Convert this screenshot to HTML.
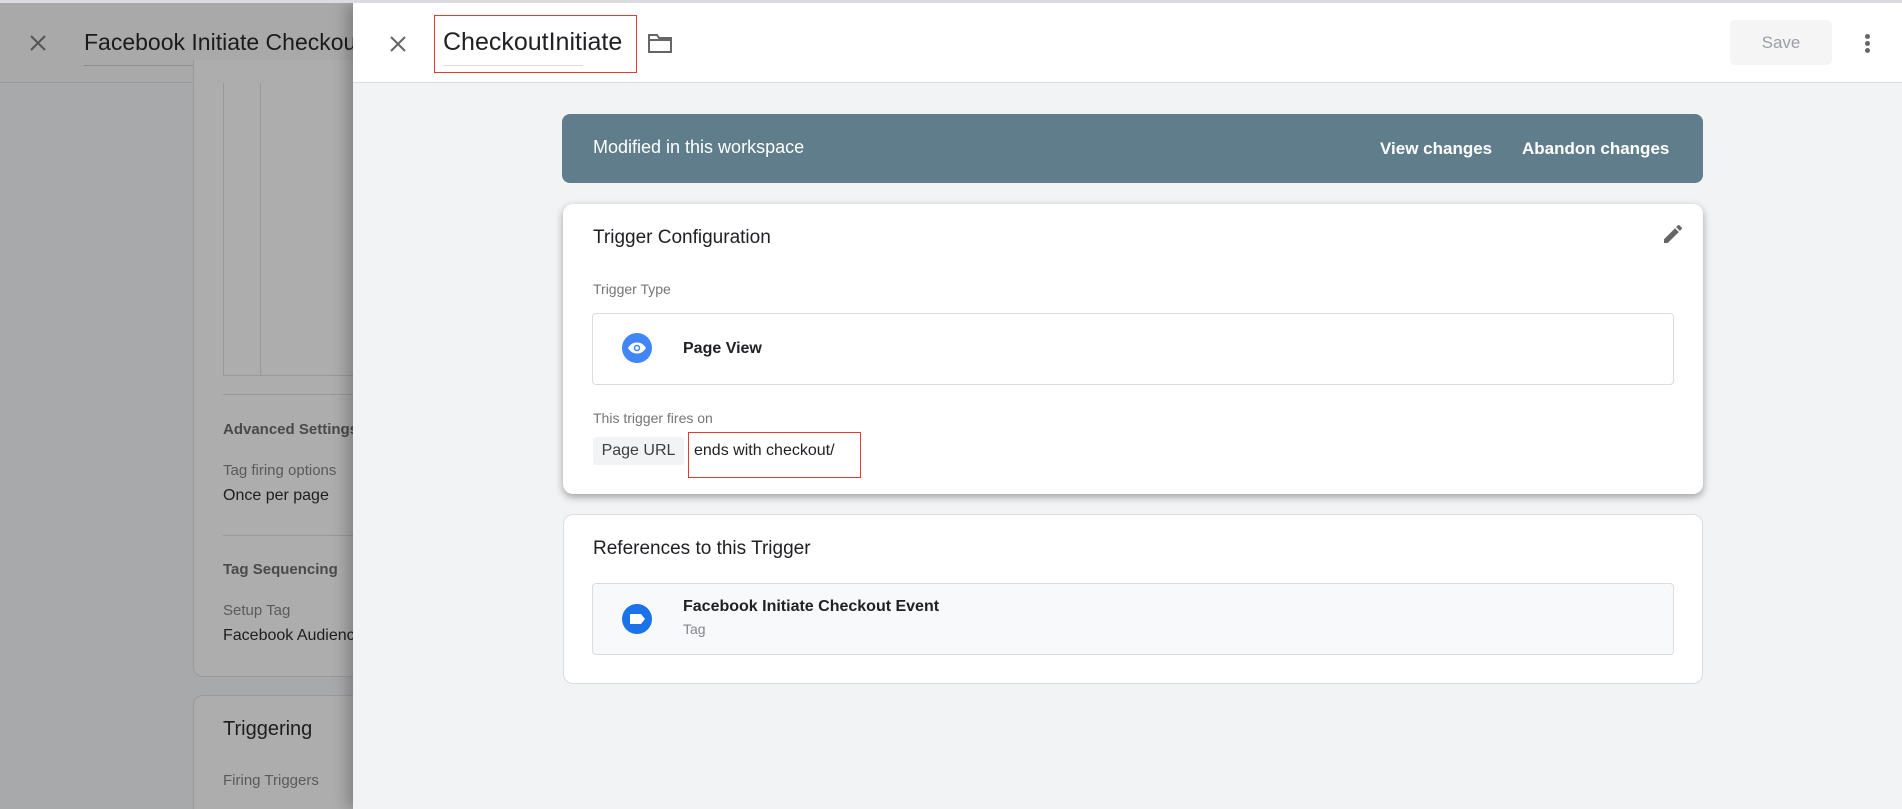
<!DOCTYPE html>
<html style="width:1902px;height:809px;overflow:hidden"><head><meta charset="utf-8"><style>
*{margin:0;padding:0;box-sizing:border-box}
body{width:1902px;height:809px;overflow:hidden;font-family:"Liberation Sans",Arial,sans-serif;background:#a8a9ab;position:relative}
.a{position:absolute}
.topline{left:0;top:0;width:1902px;height:3px;background:#dadce0;z-index:5}
.lhead{left:0;top:0;width:353px;height:83px;background:#a9a9a9;border-bottom:1px solid #999}
.lcard{background:#adadae;border:1px solid #9a9a9a;border-radius:10px}
.g{color:#5a5a5a;font-size:15px}
.d{color:#1e1e1e;font-size:16px}
.panel{left:353px;top:3px;width:1549px;height:806px;background:#f1f3f4;box-shadow:-6px 0 14px rgba(0,0,0,.25)}
.hdr{left:0;top:0;width:1549px;height:80px;background:#fff;border-bottom:1px solid #dadce0}
.card{background:#fff;border-radius:10px}
.lbl{color:#757575;font-size:14px}
</style></head><body>
<div class="a topline"></div>
<div class="a lhead"></div>
<svg class="a" style="left:28px;top:33px" width="20" height="20" viewBox="0 0 20 20"><path d="M3 3L17 17M17 3L3 17" stroke="#555" stroke-width="2"/></svg>
<div class="a" style="left:84px;top:29px;font-size:23px;color:#1b1b1b;white-space:nowrap">Facebook Initiate Checkout Event</div>
<div class="a" style="left:84px;top:65px;width:280px;height:1px;background:#8e8e8e"></div>
<div class="a lcard" style="left:193px;top:60px;width:200px;height:617px;border-top:none;border-radius:0 0 10px 10px"></div>
<div class="a" style="left:223px;top:83px;width:150px;height:293px;border:1px solid #999;border-top:none"></div>
<div class="a" style="left:260px;top:83px;width:1px;height:293px;background:#999"></div>
<div class="a" style="left:223px;top:394px;width:140px;height:1px;background:#999"></div>
<div class="a" style="left:223px;top:421px;font-size:15px;font-weight:bold;color:#4a4a4a;white-space:nowrap">Advanced Settings</div>
<div class="a g" style="left:223px;top:462px;white-space:nowrap">Tag firing options</div>
<div class="a d" style="left:223px;top:487px;white-space:nowrap">Once per page</div>
<div class="a" style="left:223px;top:535px;width:140px;height:1px;background:#999"></div>
<div class="a" style="left:223px;top:561px;font-size:15px;font-weight:bold;color:#4a4a4a;white-space:nowrap">Tag Sequencing</div>
<div class="a g" style="left:223px;top:602px;white-space:nowrap">Setup Tag</div>
<div class="a d" style="left:223px;top:627px;white-space:nowrap">Facebook Audience</div>
<div class="a lcard" style="left:193px;top:695px;width:200px;height:130px;border-bottom:none;border-radius:10px 10px 0 0;height:114px"></div>
<div class="a" style="left:223px;top:718px;font-size:20px;color:#1e1e1e">Triggering</div>
<div class="a g" style="left:223px;top:772px;white-space:nowrap">Firing Triggers</div>

<div class="a panel">
 <div class="a hdr"></div>
 <svg class="a" style="left:35px;top:31px" width="20" height="20" viewBox="0 0 20 20"><path d="M3 3L17 17M17 3L3 17" stroke="#666" stroke-width="2"/></svg>
 <div class="a" style="left:81px;top:12px;width:203px;height:58px;border:1px solid #e53935"></div>
 <div class="a" style="left:90px;top:25px;font-size:25px;color:#202124">CheckoutInitiate</div>
 <div class="a" style="left:90px;top:62px;width:140px;height:1px;background:#dadce0"></div>
 <svg class="a" style="left:294px;top:29px" width="26" height="22" viewBox="0 0 26 22"><path d="M2 3h8l2 3h12v14H2z" fill="none" stroke="#666" stroke-width="2"/><path d="M2 8h22" stroke="#666" stroke-width="2"/></svg>
 <div class="a" style="left:1377px;top:17px;width:102px;height:45px;background:#f5f5f5;border-radius:5px;color:#9aa0a6;font-size:17px;text-align:center;line-height:45px">Save</div>
 <div class="a" style="left:1512px;top:31px;width:5px;height:5px;border-radius:50%;background:#666;box-shadow:0 7px 0 #666,0 14px 0 #666"></div>

 <div class="a" style="left:209px;top:111px;width:1141px;height:69px;background:#607d8b;border-radius:8px"></div>
 <div class="a" style="left:240px;top:134px;font-size:18px;color:#fff">Modified in this workspace</div>
 <div class="a" style="left:1027px;top:136px;font-size:17px;color:#fff;font-weight:bold;white-space:nowrap">View changes</div>
 <div class="a" style="left:1169px;top:136px;font-size:17px;color:#fff;font-weight:bold;white-space:nowrap">Abandon changes</div>

 <div class="a card" style="left:210px;top:201px;width:1140px;height:290px;box-shadow:0 3px 8px rgba(0,0,0,.35)"></div>
 <div class="a" style="left:240px;top:224px;font-size:19px;color:#202124">Trigger Configuration</div>
 <svg class="a" style="left:1308px;top:219px" width="24" height="24" viewBox="0 0 24 24"><path d="M3 17.25V21h3.75L17.81 9.940l-3.75-3.75L3 17.25zM20.71 7.04a1 1 0 000-1.41l-2.34-2.34a1 1 0 00-1.41 0l-1.83 1.83 3.75 3.75 1.83-1.83z" fill="#666"/></svg>
 <div class="a lbl" style="left:240px;top:278px">Trigger Type</div>
 <div class="a" style="left:239px;top:310px;width:1082px;height:72px;border:1px solid #dadce0;border-radius:4px;background:#fff"></div>
 <svg class="a" style="left:269px;top:330px" width="30" height="30" viewBox="0 0 30 30"><circle cx="15" cy="15" r="15" fill="#4285f4"/><path d="M6 15c2.5-4 5.5-5.5 9-5.5s6.5 1.5 9 5.5c-2.5 4-5.5 5.5-9 5.5S8.5 19 6 15z" fill="#fff"/><circle cx="15" cy="15" r="3.3" fill="#4285f4"/><circle cx="15" cy="15" r="1.8" fill="#fff"/></svg>
 <div class="a" style="left:330px;top:337px;font-size:16px;font-weight:bold;color:#202124">Page View</div>
 <div class="a lbl" style="left:240px;top:407px">This trigger fires on</div>
 <div class="a" style="left:240px;top:434px;width:91px;height:28px;background:#f1f3f4;border-radius:3px;font-size:16px;color:#3c4043;text-align:center;line-height:28px">Page URL</div>
 <div class="a" style="left:335px;top:429px;width:173px;height:46px;border:1px solid #e53935"></div>
 <div class="a" style="left:341px;top:439px;font-size:16px;color:#202124">ends with checkout/</div>

 <div class="a card" style="left:210px;top:511px;width:1140px;height:170px;border:1px solid #dadce0"></div>
 <div class="a" style="left:240px;top:535px;font-size:19px;color:#202124">References to this Trigger</div>
 <div class="a" style="left:239px;top:580px;width:1082px;height:72px;border:1px solid #dadce0;border-radius:4px;background:#f8f9fa"></div>
 <svg class="a" style="left:269px;top:601px" width="30" height="30" viewBox="0 0 30 30"><circle cx="15" cy="15" r="15" fill="#1a73e8"/><path d="M8 10h11l4 5-4 5H8z" fill="#fff"/></svg>
 <div class="a" style="left:330px;top:595px;font-size:16px;font-weight:bold;color:#202124">Facebook Initiate Checkout Event</div>
 <div class="a" style="left:330px;top:618px;font-size:14px;color:#80868b">Tag</div>
</div>
</body></html>
